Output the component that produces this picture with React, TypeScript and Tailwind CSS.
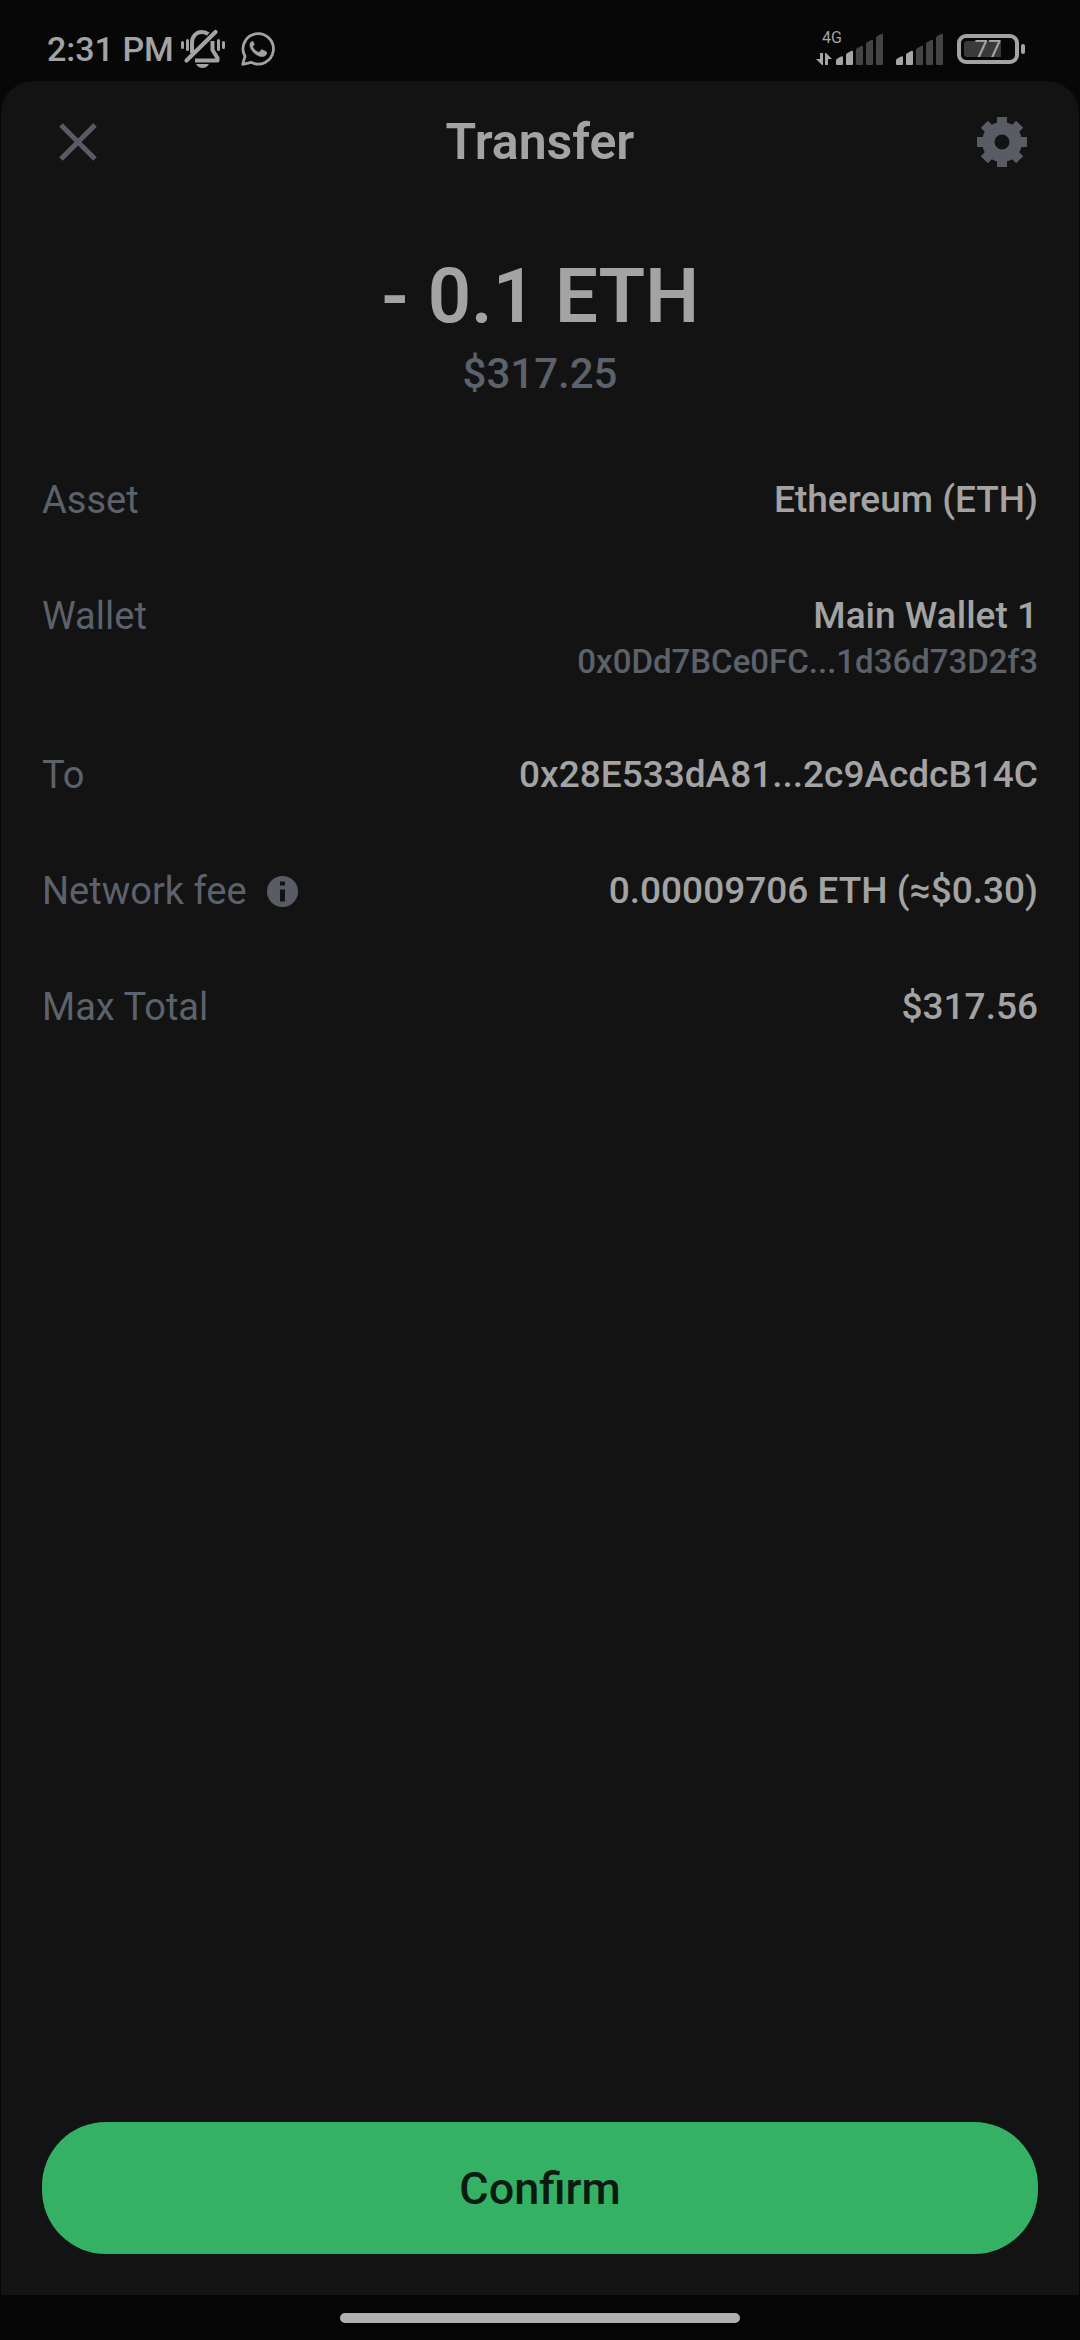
import type { ReactNode } from "react";

function MutedBellIcon() {
  return (
    <svg width="46" height="40" viewBox="0 0 46 40" fill="none" aria-hidden="true">
      <g stroke="#a3a3a3" strokeWidth="3" strokeLinecap="round">
        <path d="M2.5 13.500v5M7.500 11.500v9M38.500 11.500v9M43.500 13.500v5" />
      </g>
      <path
        d="M12 24V13.500C12 7 16.500 3 22 3c2.500 0 4.600.7 6.300 2.100M32.500 12v9l5 8v2.500H15"
        stroke="#a3a3a3"
        strokeWidth="4"
        strokeLinejoin="round"
      />
      <path d="M6.500 31.500 35.500 3" stroke="#a3a3a3" strokeWidth="4.200" strokeLinecap="round" />
      <path d="M16 35h13c-1.500 2.500-3.700 4-6.500 4s-5-1.500-6.500-4Z" fill="#a3a3a3" />
    </svg>
  );
}

function WhatsAppIcon() {
  return (
    <svg width="34" height="34" viewBox="0 0 34 34" fill="none" aria-hidden="true">
      <path
        d="M1.700 32.300 4 24.300A15.200 15.200 0 1 1 10.200 30.300Z"
        stroke="#a3a3a3"
        strokeWidth="2.800"
        strokeLinejoin="round"
      />
      <path
        d="M11.500 9.200c-1.400.3-2.700 2.100-2.600 4.300.2 2.600 2 5.500 4.900 8 3 2.400 6.200 3.500 8.400 3 2.200-.5 3.400-2 3.500-3.600.1-.8-.2-1.100-.8-1.400l-3.300-1.600c-.7-.3-1.200-.2-1.600.3l-1.400 1.700c-.4.500-.9.500-1.500.3-2.100-.9-4-2.600-5.200-4.900-.3-.5-.2-.9.200-1.300.7-.8 1.400-1.400 1.100-2.300l-1.300-2.100c-.2-.5-.2-.5-.4-.4Z"
        fill="#a3a3a3"
        stroke="#a3a3a3"
        strokeWidth="0.600"
      />
    </svg>
  );
}

const bars = [
  "M0 31v-3.500q0-1 1-1.700l4-2.300q2-1 2 1V31q0 1-1 1H1q-1 0-1-1Z",
  "M10 31V22q0-1 1-1.700l4-2.300q2-1 2 1V31q0 1-1 1h-5q-1 0-1-1Z",
  "M20 31V17q0-1 1-1.700l4-2.300q2-1 2 1V31q0 1-1 1h-5q-1 0-1-1Z",
  "M30 31V11q0-1 1-1.700l4-2.300q2-1 2 1V31q0 1-1 1h-5q-1 0-1-1Z",
  "M40 31V5q0-1 1-1.700l4-2.300q2-1 2 1V31q0 1-1 1h-5q-1 0-1-1Z",
];

function SignalIcon() {
  return (
    <svg width="47" height="32" viewBox="0 0 47 32" aria-hidden="true">
      {bars.map((d, i) => (
        <path key={d} d={d} fill={i < 2 ? "#a6a6a6" : "#444444"} />
      ))}
    </svg>
  );
}

function DataArrowsIcon() {
  return (
    <svg width="16" height="12" viewBox="0 0 16 12" fill="#a6a6a6" aria-hidden="true">
      <path d="M4 0h3v12H6L0 6h4ZM9 12V0h1l6 6h-4v6Z" />
    </svg>
  );
}

function Battery({ level }: { level: number }) {
  return (
    <div className="flex items-center gap-0.5">
      <div className="relative flex h-[30px] w-[62px] items-center rounded-[9px] border-4 border-[#a3a3a3] px-[3px]">
        <div className="h-4 w-[37px] rounded-l-[3px] bg-[#3a3a3a]" />
        <span className="absolute inset-0 flex items-center justify-center text-[24px] leading-none text-[#a8a8a8]">
          {level}
        </span>
      </div>
      <div className="h-2.5 w-1 rounded-full bg-[#a3a3a3]" />
    </div>
  );
}

function StatusBar() {
  return (
    <div className="flex h-[81px] items-center justify-between pt-[17px] pr-[55px] pl-[47px]">
      <div className="flex items-center">
        <span className="text-[34px] leading-[40px] font-medium text-[#a3a3a3]">2:31 PM</span>
        <div className="ml-1.5 flex items-center gap-[15px]">
          <MutedBellIcon />
          <WhatsAppIcon />
        </div>
      </div>
      <div className="flex items-center">
        <div className="relative flex items-end gap-1">
          <span className="absolute -top-[3px] left-[6px] text-[16px] leading-4 text-[#a3a3a3]">4G</span>
          <DataArrowsIcon />
          <SignalIcon />
        </div>
        <div className="mr-3.5 ml-[13px]">
          <SignalIcon />
        </div>
        <Battery level={77} />
      </div>
    </div>
  );
}

function CloseIcon() {
  return (
    <svg width="38" height="38" viewBox="0 0 38 38" aria-hidden="true">
      <path d="M2 2 36 36M36 2 2 36" stroke="#5a5c65" strokeWidth="5" />
    </svg>
  );
}

function GearIcon() {
  return (
    <svg width="50" height="50" viewBox="-25 -25 50 50" fill="#5a5c65" aria-hidden="true">
      {[0, 45, 90, 135].map((angle) => (
        <path
          key={angle}
          d="M-5-25H5V-17H-5ZM-5 17H5V25H-5Z"
          transform={`rotate(${angle})`}
        />
      ))}
      <path
        fillRule="evenodd"
        d="M0-20a20 20 0 1 1 0 40 20 20 0 0 1 0-40ZM0-7.500a7.500 7.500 0 1 0 0 15 7.500 7.500 0 0 0 0-15Z"
      />
    </svg>
  );
}

function InfoIcon() {
  return (
    <svg width="31" height="31" viewBox="0 0 31 31" aria-hidden="true">
      <circle cx="15.500" cy="15.500" r="15.500" fill="#5a5c65" />
      <path d="M13 5.500h5v4h-5ZM13 13.500h5v12h-5Z" fill="#131313" />
    </svg>
  );
}

function Row({ label, action, children }: { label: string; action?: ReactNode; children: ReactNode }) {
  return (
    <div className="flex items-start justify-between gap-8">
      <dt className="flex items-center gap-5 text-[38px] leading-[48px] text-[#5c626b]">
        {label}
        {action}
      </dt>
      <dd className="text-right text-[37px] leading-[48px] font-medium text-[#a3a3a3]">{children}</dd>
    </div>
  );
}

export default function App() {
  return (
    <div className="flex min-h-screen flex-col bg-[#070707] font-['Roboto',sans-serif]">
      <StatusBar />
      <main className="mx-px flex grow flex-col rounded-t-[32px] bg-[#131313] px-[41px]">
        <header className="flex h-[122px] items-center justify-between pr-[11px] pl-[17px]">
          <button type="button" aria-label="Close" className="flex w-11 items-center">
            <CloseIcon />
          </button>
          <h1 className="text-[50px] leading-[60px] font-semibold text-[#a3a3a3]">Transfer</h1>
          <button type="button" aria-label="Settings" className="flex w-[50px] items-center justify-center">
            <GearIcon />
          </button>
        </header>

        <section className="pt-[46px] text-center">
          <p className="text-[76px] leading-[94px] font-semibold text-[#a3a3a3]">- 0.1 ETH</p>
          <p className="text-[42px] leading-[62px] font-medium text-[#5c626b]">$317.25</p>
        </section>

        <dl className="mt-[71px] flex flex-col gap-[68px]">
          <Row label="Asset">Ethereum (ETH)</Row>
          <Row label="Wallet">
            <p>Main Wallet 1</p>
            <p className="text-[33px] leading-[43px] text-[#5c626b]">0x0Dd7BCe0FC...1d36d73D2f3</p>
          </Row>
          <Row label="To">0x28E533dA81...2c9AcdcB14C</Row>
          <Row
            label="Network fee"
            action={
              <button type="button" aria-label="About the network fee">
                <InfoIcon />
              </button>
            }
          >
            0.00009706 ETH (≈$0.30)
          </Row>
          <Row label="Max Total">$317.56</Row>
        </dl>

        <button
          type="button"
          className="mt-auto mb-[41px] h-[132px] w-full rounded-[64px] bg-[#34b165] pt-0.5 text-[45px] font-medium text-[#0c1a12]"
        >
          Confirm
        </button>
      </main>
      <div className="flex h-[45px] items-center justify-center bg-[#050505]">
        <div className="h-2.5 w-[37%] rounded-full bg-[#b0b0b0]" />
      </div>
    </div>
  );
}
